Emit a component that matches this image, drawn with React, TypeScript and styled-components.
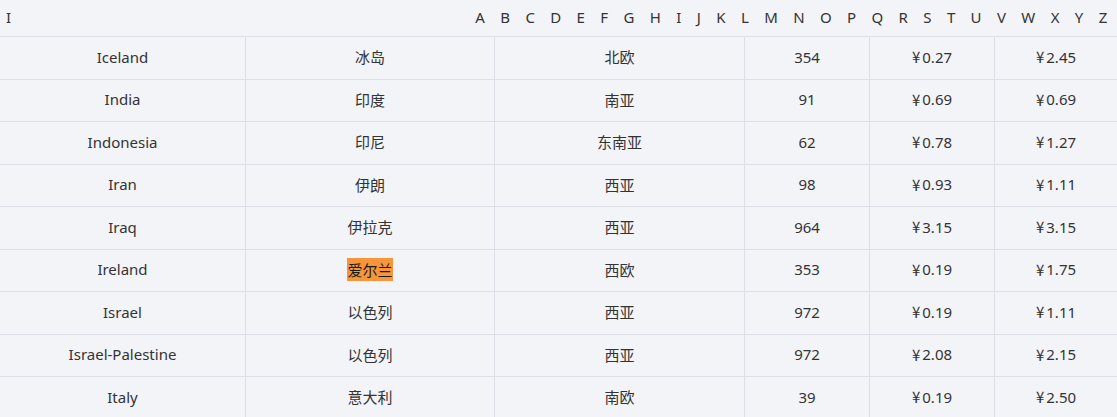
import React from 'react';
import styled, { createGlobalStyle } from 'styled-components';

const GlobalStyle = createGlobalStyle`
  html, body {
    margin: 0;
    padding: 0;
    background: #f3f4f8;
  }
  body {
    font-family: "Noto Sans", "Noto Sans CJK SC", sans-serif;
    color: #333;
    font-size: 15px;
  }
`;

const Page = styled.div`
  width: 1117px;
  height: 417px;
  overflow: hidden;
  background: #f3f4f8;
`;

const Header = styled.div`
  display: flex;
  align-items: center;
  justify-content: space-between;
  height: 37px;
  border-bottom: 1px solid #dcdfe6;
  box-sizing: border-box;
  padding: 0 2px 3px 6px;
`;

const Current = styled.span`
  font-size: 15px;
  color: #333;
`;

const Letters = styled.ul`
  display: flex;
  list-style: none;
  margin: 0;
  padding: 0;
`;

const Letter = styled.li`
  padding: 0 7.7px;
  font-size: 15px;
  color: #333;
  cursor: pointer;
`;

const Table = styled.div`
  display: grid;
  grid-template-columns: 245px 249px 250px 125px 125px 1fr;
`;

const Cell = styled.div<{ $first?: boolean }>`
  height: 42.5px;
  box-sizing: border-box;
  display: flex;
  align-items: center;
  justify-content: center;
  padding-bottom: 2px;
  border-bottom: 1px solid #dcdfe6;
  border-left: ${(p) => (p.$first ? 'none' : '1px solid #dcdfe6')};
  white-space: nowrap;
`;

const Yen = styled.span`
  font-family: "Noto Sans CJK SC", sans-serif;
  margin-right: 2px;
`;

const Mark = styled.mark`
  background: #f7953a;
  color: #1a1a1a;
  padding: 1px 0;
`;

const letters = 'ABCDEFGHIJKLMNOPQRSTUVWXYZ'.split('');

const rows: [string, string, string, string, string, string][] = [
  ['Iceland', '冰岛', '北欧', '354', '0.27', '2.45'],
  ['India', '印度', '南亚', '91', '0.69', '0.69'],
  ['Indonesia', '印尼', '东南亚', '62', '0.78', '1.27'],
  ['Iran', '伊朗', '西亚', '98', '0.93', '1.11'],
  ['Iraq', '伊拉克', '西亚', '964', '3.15', '3.15'],
  ['Ireland', '爱尔兰', '西欧', '353', '0.19', '1.75'],
  ['Israel', '以色列', '西亚', '972', '0.19', '1.11'],
  ['Israel-Palestine', '以色列', '西亚', '972', '2.08', '2.15'],
  ['Italy', '意大利', '南欧', '39', '0.19', '2.50'],
];

const renderValue = (v: string, col: number) => {
  if (col >= 4) {
    return (
      <>
        <Yen>¥</Yen>
        {v}
      </>
    );
  }
  if (v === '爱尔兰') return <Mark>{v}</Mark>;
  return v;
};

const App = () => {
  return (
    <Page>
      <GlobalStyle />
      <Header>
        <Current>I</Current>
        <Letters>
          {letters.map((l) => (
            <Letter key={l}>{l}</Letter>
          ))}
        </Letters>
      </Header>
      <Table>
        {rows.map((row, i) =>
          row.map((v, j) => (
            <Cell key={`${i}-${j}`} $first={j === 0}>
              {renderValue(v, j)}
            </Cell>
          ))
        )}
      </Table>
    </Page>
  );
};

export default App;
